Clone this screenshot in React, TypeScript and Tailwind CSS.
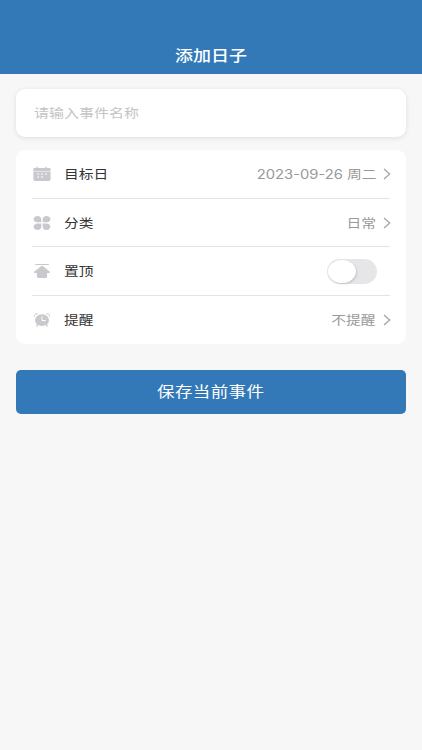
import React from "react";

const CalendarIcon = () => (
  <svg width="18" height="16" viewBox="0 0 18 16" fill="#c9c9cd">
    <path d="M3.500.8h1.400v1.200h7.600V.8h1.400v1.200h2.100c1 0 1.600.5 1.600 1.300v1.700H.4V3.300c0-.8.6-1.300 1.600-1.300h1.500z" />
    <path
      fillRule="evenodd"
      d="M.4 5.500h17.200v8c0 .9-.6 1.400-1.600 1.400H2c-1 0-1.600-.5-1.600-1.400zM4.200 7.400v1.200h2V7.400zM8 7.400v1.200h2V7.400zM11.800 7.400v1.200h2V7.400zM4.200 10.400v1.200h2v-1.200zM8 10.400v1.200h2v-1.200z"
    />
  </svg>
);

const CategoryIcon = () => (
  <svg width="18" height="16" viewBox="0 0 18 16" fill="#c9c9cd">
    <path d="M4.600 1c2.300 0 3.700 1.300 3.700 3.200v3.100H4.600C2.300 7.300.6 6 .6 4.150S2.300 1 4.600 1z" />
    <path d="M13.400 1c-2.300 0-3.700 1.300-3.700 3.200v3.100h3.700c2.300 0 4-1.300 4-3.150S15.700 1 13.400 1z" />
    <path d="M4.600 14.900c2.300 0 3.700-1.300 3.700-3.200V8.600H4.600C2.300 8.600.6 9.900.6 11.750s1.700 3.150 4 3.150z" />
    <path d="M13.400 14.900c-2.300 0-3.700-1.300-3.700-3.200V8.600h3.700c2.300 0 4 1.300 4 3.150s-1.700 3.150-4 3.150z" />
  </svg>
);

const PinTopIcon = () => (
  <svg width="18" height="16" viewBox="0 0 18 16" fill="#c9c9cd">
    <rect x="2" y="1" width="14" height="1" rx=".4" />
    <path d="M8 3.300c.6-.5 1.400-.5 2 0l6.700 5.300c.8.7.4 1.500-.6 1.500h-2v3.300c0 .9-.6 1.500-1.600 1.500h-7c-1 0-1.600-.6-1.600-1.500v-3.300h-2c-1 0-1.400-.8-.6-1.500z" />
  </svg>
);

const AlarmIcon = () => (
  <svg width="18" height="16" viewBox="0 0 18 16" fill="none">
    <path
      d="M1.300 4.400c-.2-1.600.9-2.600 3-2.700M16.700 4.400c.2-1.600-.9-2.600-3-2.700"
      stroke="#c9c9cd"
      strokeWidth="1"
      strokeLinecap="round"
    />
    <path d="M5 12L3.900 13.800M13 12l1.100 1.800" stroke="#c9c9cd" strokeWidth="1.500" strokeLinecap="round" />
    <ellipse cx="9" cy="8.200" rx="7" ry="5.900" fill="#c9c9cd" />
    <path d="M9 4.800v3.800h3.500" stroke="#fff" strokeWidth="1" strokeLinecap="round" />
  </svg>
);

const ArrowRight = () => (
  <svg
    width="8"
    height="12"
    viewBox="0 0 8 12"
    fill="none"
    stroke="#a0a2a6"
    strokeWidth="1.200"
    className="ml-[7px]"
  >
    <path d="M1 1l5.700 5L1 11" />
  </svg>
);

const Toggle = () => (
  <div className="mr-[14px] flex h-[25px] w-[50px] items-center rounded-full bg-[#e6e6e8] p-px">
    <div className="h-[23px] w-[28px] rounded-[50%] bg-white shadow-[1px_1px_2px_rgba(0,0,0,0.15)]" />
  </div>
);

const rows = [
  { title: "目标日", icon: <CalendarIcon />, value: "2023-09-26 周二" },
  { title: "分类", icon: <CategoryIcon />, value: "日常" },
  { title: "置顶", icon: <PinTopIcon />, toggle: true },
  { title: "提醒", icon: <AlarmIcon />, value: "不提醒" },
];

const App = () => {
  return (
    <div className="min-h-[750px] w-full bg-[#f7f7f7] font-['Inter','Noto_Sans_CJK_SC',sans-serif]">
      <header className="flex h-[74px] items-end justify-center bg-[#3379b7] pb-[6px]">
        <h1 className="scale-x-[1.2] text-[15px] leading-6 font-medium text-white">
          添加日子
        </h1>
      </header>

      <main className="px-4 pt-[15px]">
        <div className="flex h-12 items-center rounded-[9px] bg-white px-[18px] pt-[2px] shadow-[0_1px_5px_rgba(0,0,0,0.1)]">
          <span className="origin-left scale-x-[1.2] text-[12.500px] text-[#c4c4c4]">
            请输入事件名称
          </span>
        </div>

        <div className="mt-[13px] h-[194px] rounded-[9px] bg-white px-4">
          {rows.map((row, index) => (
            <div
              key={row.title}
              className={`flex h-[48.5px] items-center pt-px ${
                index < rows.length - 1 ? "border-b border-[#e3e3e3]" : ""
              }`}
            >
              <div className="w-[31.5px] pl-[1px]">{row.icon}</div>
              <span className="origin-left scale-x-[1.18] pt-[3px] text-[12.500px] text-[#333]">
                {row.title}
              </span>
              <div className="-mr-[1px] ml-auto flex items-center">
                {row.toggle ? (
                  <Toggle />
                ) : (
                  <>
                    <span className="origin-right scale-x-[1.18] pt-[3px] text-[12.500px] text-[#999]">
                      {row.value}
                    </span>
                    <ArrowRight />
                  </>
                )}
              </div>
            </div>
          ))}
        </div>

        <button className="mt-[26px] flex h-[43.5px] w-full items-center justify-center rounded-[5px] bg-[#3379b7] pt-[2px] text-white">
          <span className="scale-x-[1.2] text-[14.600px] tracking-[0.3px]">
            保存当前事件
          </span>
        </button>
      </main>
    </div>
  );
};

export default App;
